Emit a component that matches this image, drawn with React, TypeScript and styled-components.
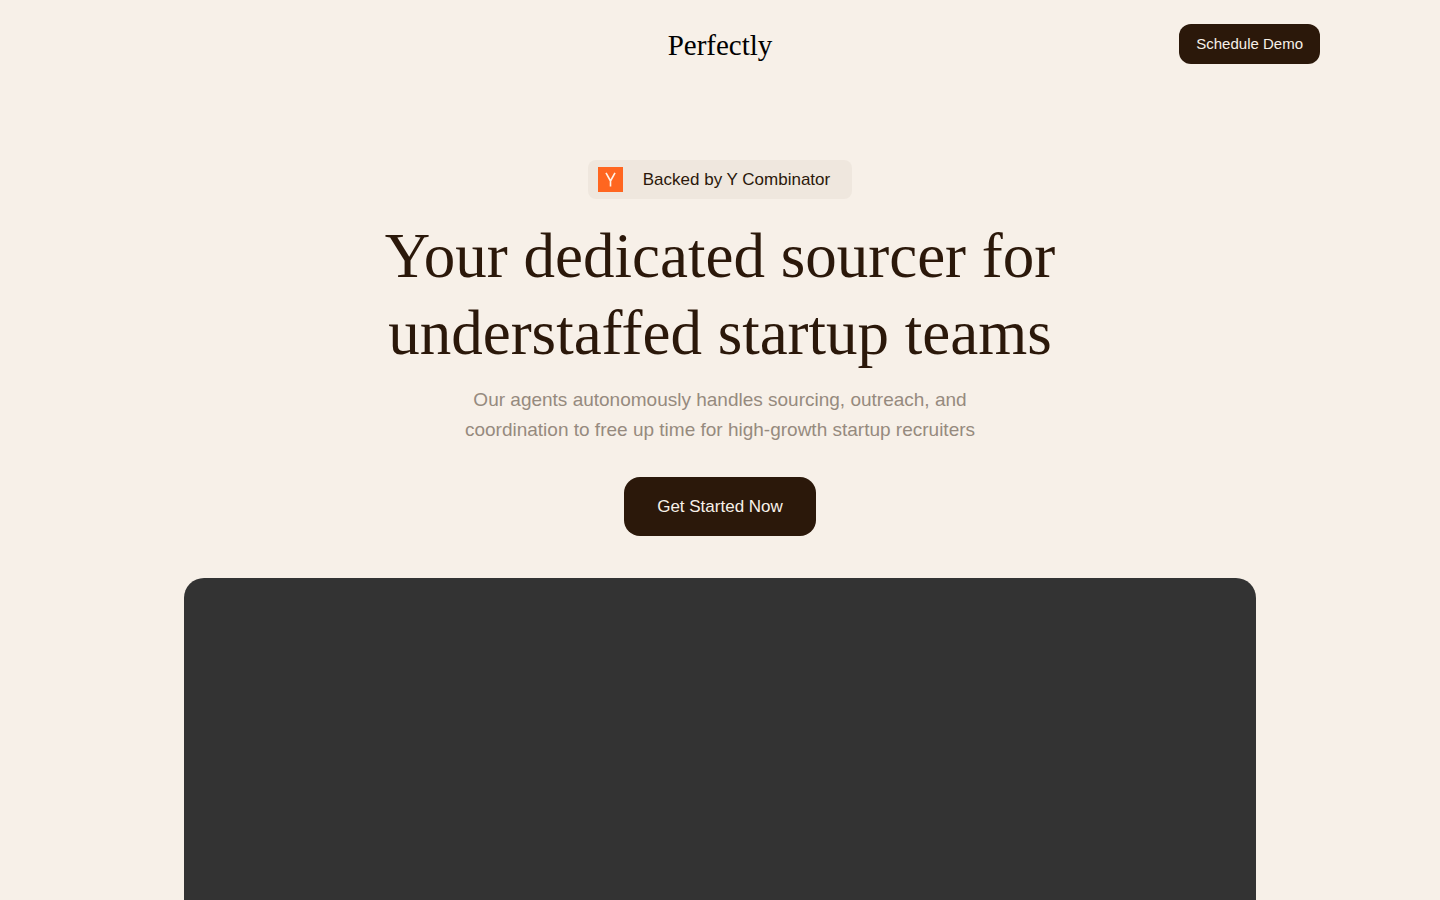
import React from "react";
import styled, { createGlobalStyle } from "styled-components";

const GlobalStyle = createGlobalStyle`
  *, *::before, *::after {
    box-sizing: border-box;
  }
  body {
    margin: 0;
    background: #f7f0e8;
    color: #2b180a;
    font-family: "Liberation Sans", Arial, sans-serif;
  }
`;

const Page = styled.div`
  display: flex;
  flex-direction: column;
  min-height: 100vh;
`;

const Header = styled.header`
  display: grid;
  grid-template-columns: 1fr auto 1fr;
  align-items: center;
  width: 100%;
  max-width: 1248px;
  margin: 0 auto;
  padding: 24px;
`;

const Brand = styled.a`
  grid-column: 2;
  padding-top: 2px;
  color: #000;
  font-family: "Liberation Serif", "Times New Roman", serif;
  font-size: 29px;
  line-height: 38px;
  text-decoration: none;
`;

const Button = styled.button<{ $large?: boolean }>`
  border: 0;
  background: #2b180a;
  color: #f7f0e8;
  font-family: inherit;
  white-space: nowrap;
  cursor: pointer;
  padding: ${(p) => (p.$large ? "16px 33px" : "8px 17px")};
  border-radius: ${(p) => (p.$large ? "16px" : "12px")};
  font-size: ${(p) => (p.$large ? "17px" : "15px")};
  line-height: ${(p) => (p.$large ? "27px" : "24px")};
`;

const HeaderAction = styled.div`
  justify-self: end;
`;

const Hero = styled.main`
  flex: 1;
  display: flex;
  flex-direction: column;
  align-items: center;
  padding: 72px 24px 0;
  text-align: center;
`;

const Badge = styled.div`
  display: flex;
  align-items: center;
  gap: 20px;
  padding: 7px 22px 7px 10px;
  border-radius: 8px;
  background: #efe7de;
  font-size: 17px;
  line-height: 25px;
`;

const Title = styled.h1`
  margin: 19px 0 0;
  max-width: 768px;
  font-family: "Liberation Serif", "Times New Roman", serif;
  font-weight: 400;
  font-size: 63px;
  line-height: 77px;
`;

const Subtitle = styled.p`
  margin: 13px 0 32px;
  max-width: 576px;
  color: #968a7e;
  font-size: 19px;
  line-height: 30px;
`;

const Video = styled.section`
  flex: 1;
  width: 100%;
  max-width: 1072px;
  margin-top: 42px;
  border-radius: 20px 20px 0 0;
  background: #333;
`;

function CombinatorLogo() {
  return (
    <svg width="25" height="25" viewBox="0 0 25 25" aria-hidden="true">
      <rect width="25" height="25" fill="#ff6620" />
      <path
        d="M8 5.8 12.5 14 17 5.8M12.5 13.6v5.9"
        fill="none"
        stroke="#fff3e8"
        strokeWidth="1.6"
      />
    </svg>
  );
}

export default function App() {
  return (
    <Page>
      <GlobalStyle />
      <Header>
        <Brand href="#">Perfectly</Brand>
        <HeaderAction>
          <Button type="button">Schedule Demo</Button>
        </HeaderAction>
      </Header>
      <Hero>
        <Badge>
          <CombinatorLogo />
          <span>Backed by Y Combinator</span>
        </Badge>
        <Title>
          Your dedicated sourcer for
          <br />
          understaffed startup teams
        </Title>
        <Subtitle>
          Our agents autonomously handles sourcing, outreach, and
          <br />
          coordination to free up time for high-growth startup recruiters
        </Subtitle>
        <Button type="button" $large>
          Get Started Now
        </Button>
        <Video aria-label="Product video" />
      </Hero>
    </Page>
  );
}
